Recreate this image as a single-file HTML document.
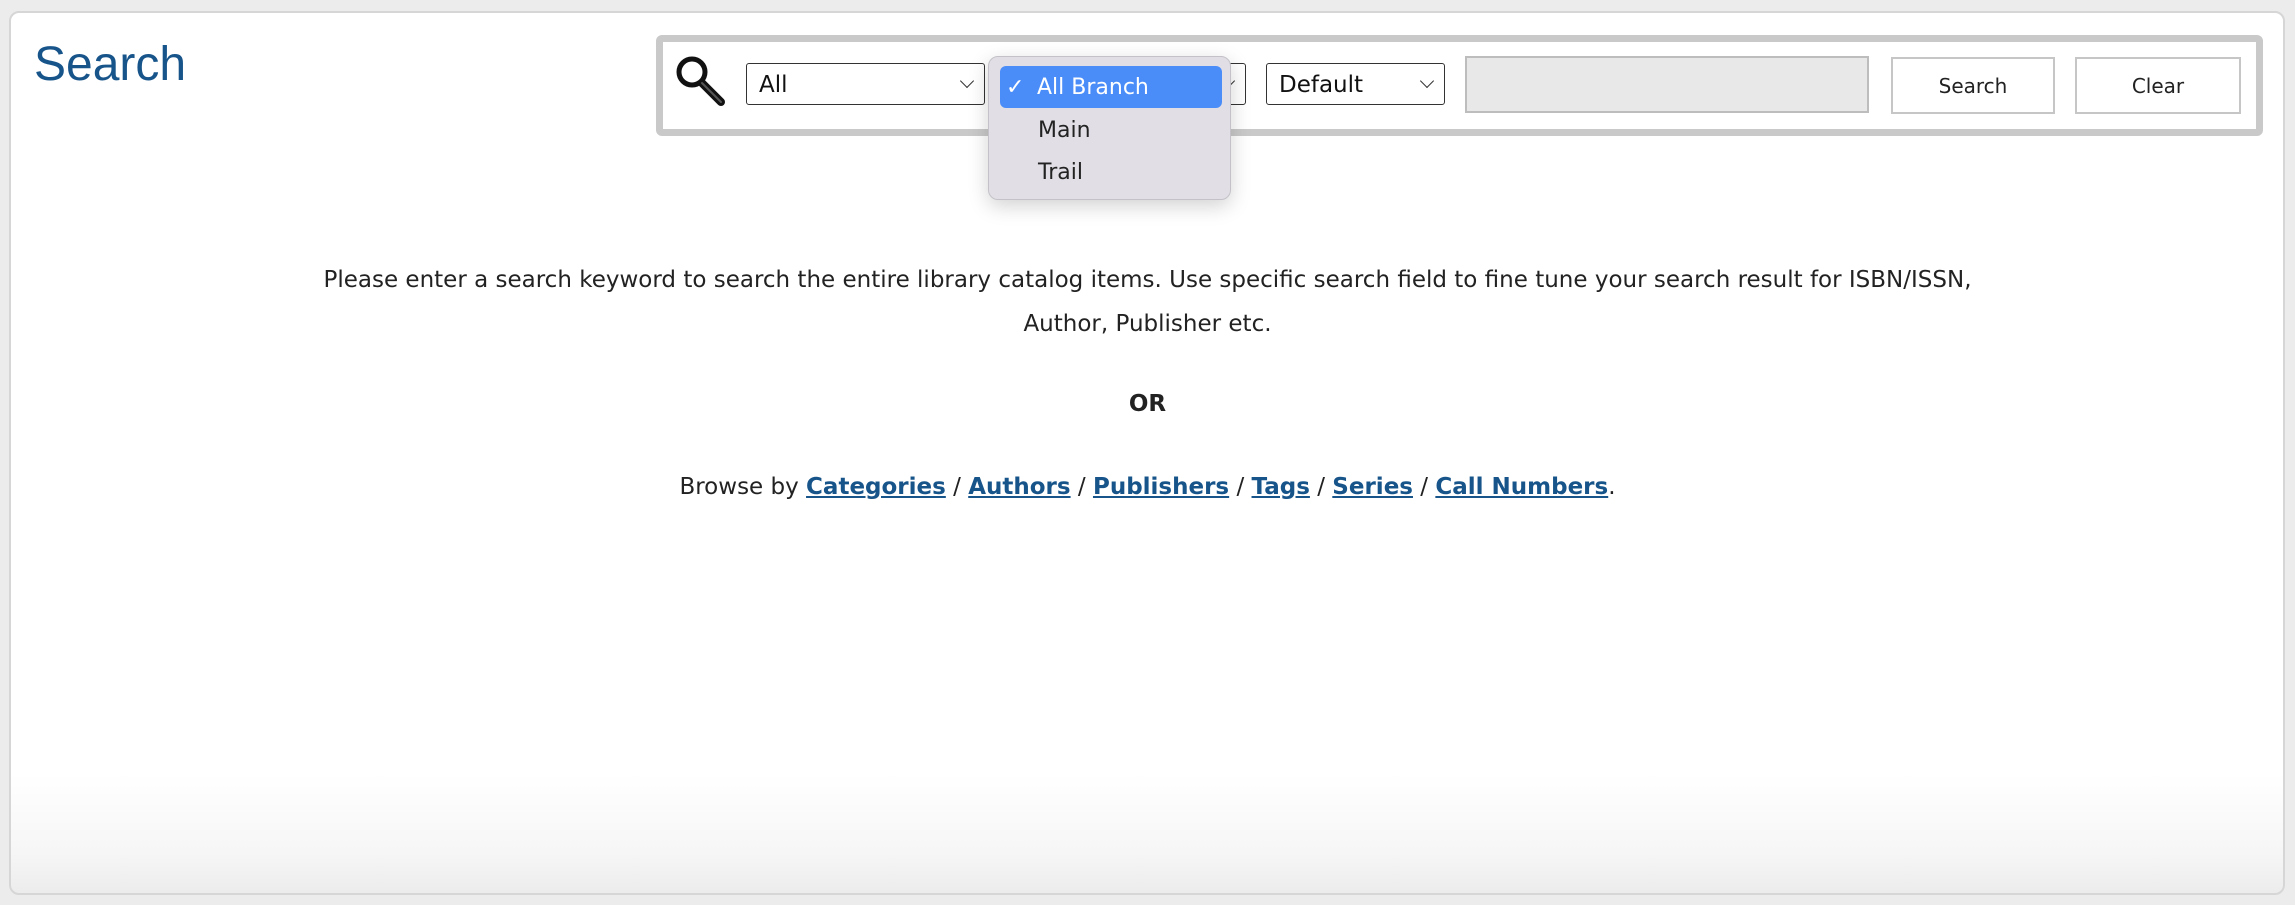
<!DOCTYPE html>
<html><head><meta charset="utf-8"><style>
html,body{margin:0;padding:0;width:2295px;height:905px;background:#ececec;overflow:hidden;font-family:"DejaVu Sans","Liberation Sans",sans-serif}
.panel{position:absolute;left:9px;top:11px;width:2276px;height:884px;background:linear-gradient(to bottom,#fff 0,#fff 760px,#f6f6f6 840px,#ebebeb 884px);border:2px solid #d6d6d6;border-radius:10px;box-sizing:border-box}
.title{position:absolute;left:34px;top:37px;font-family:"Liberation Sans",Arial,sans-serif;font-size:48px;color:#17548a}
.bar{position:absolute;left:656px;top:35px;width:1607px;height:101px;background:#fff;border:7px solid #c9c9c9;border-radius:6px;box-sizing:border-box}
.sel{position:absolute;top:63px;height:42px;border:1.5px solid #333;border-radius:3px;background:#fff;box-sizing:border-box;font-size:23px;line-height:43px;padding-left:12px;color:#111}
.sel:after{content:"";position:absolute;right:12px;top:12px;width:9px;height:9px;border-right:1.6px solid #333;border-bottom:1.6px solid #333;transform:rotate(45deg)}
.inp{position:absolute;left:1465px;top:56px;width:404px;height:57px;background:#e8e8e8;border:2px solid #bdbdbd;box-sizing:border-box}
.btn{position:absolute;top:57px;height:57px;border:2px solid #c6c6c6;background:#fff;box-sizing:border-box;text-align:center;line-height:55px;font-size:20px;color:#222}
.dd{position:absolute;left:988px;top:56px;width:243px;height:144px;background:#e1dfe5;border:1px solid #c4c2c8;border-radius:10px;box-shadow:0 6px 20px rgba(0,0,0,.18);box-sizing:border-box}
.hl{position:absolute;left:11px;top:9px;width:222px;height:42px;background:#4b8df8;border-radius:6px;color:#fff;font-size:22px;line-height:44px}
.it{position:absolute;left:49px;font-size:22px;color:#222}
.txt{position:absolute;left:0;width:2295px;text-align:center;font-size:23px;color:#222}
a{color:#17548a;font-weight:bold;text-decoration:underline}
</style></head><body>
<div class="panel"></div>
<div class="title">Search</div>
<div class="bar"></div>
<svg style="position:absolute;left:673px;top:54px" width="56" height="52" viewBox="0 0 56 52">
<circle cx="19" cy="18" r="13" fill="none" stroke="#111" stroke-width="5"/>
<line x1="29" y1="29" x2="48" y2="48" stroke="#111" stroke-width="8" stroke-linecap="round"/>
<line x1="29" y1="29" x2="48" y2="48" stroke="#555" stroke-width="2" stroke-linecap="round"/>
</svg>
<div class="sel" style="left:746px;width:239px">All</div>
<div class="sel" style="left:1000px;width:246px"></div>
<div class="sel" style="left:1266px;width:179px">Default</div>
<div class="inp"></div>
<div class="btn" style="left:1891px;width:164px">Search</div>
<div class="btn" style="left:2075px;width:166px">Clear</div>
<div class="dd">
<div class="hl"><span style="position:absolute;left:6px">✓</span><span style="position:absolute;left:37px">All Branch</span></div>
<div class="it" style="top:61px">Main</div>
<div class="it" style="top:103px">Trail</div>
</div>
<div class="txt" style="top:258px;line-height:44px">Please enter a search keyword to search the entire library catalog items. Use specific search field to fine tune your search result for ISBN/ISSN,<br>Author, Publisher etc.</div>
<div class="txt" style="top:391px;font-weight:bold">OR</div>
<div class="txt" style="top:474px">Browse by <a>Categories</a> / <a>Authors</a> / <a>Publishers</a> / <a>Tags</a> / <a>Series</a> / <a>Call Numbers</a>.</div>
</body></html>
